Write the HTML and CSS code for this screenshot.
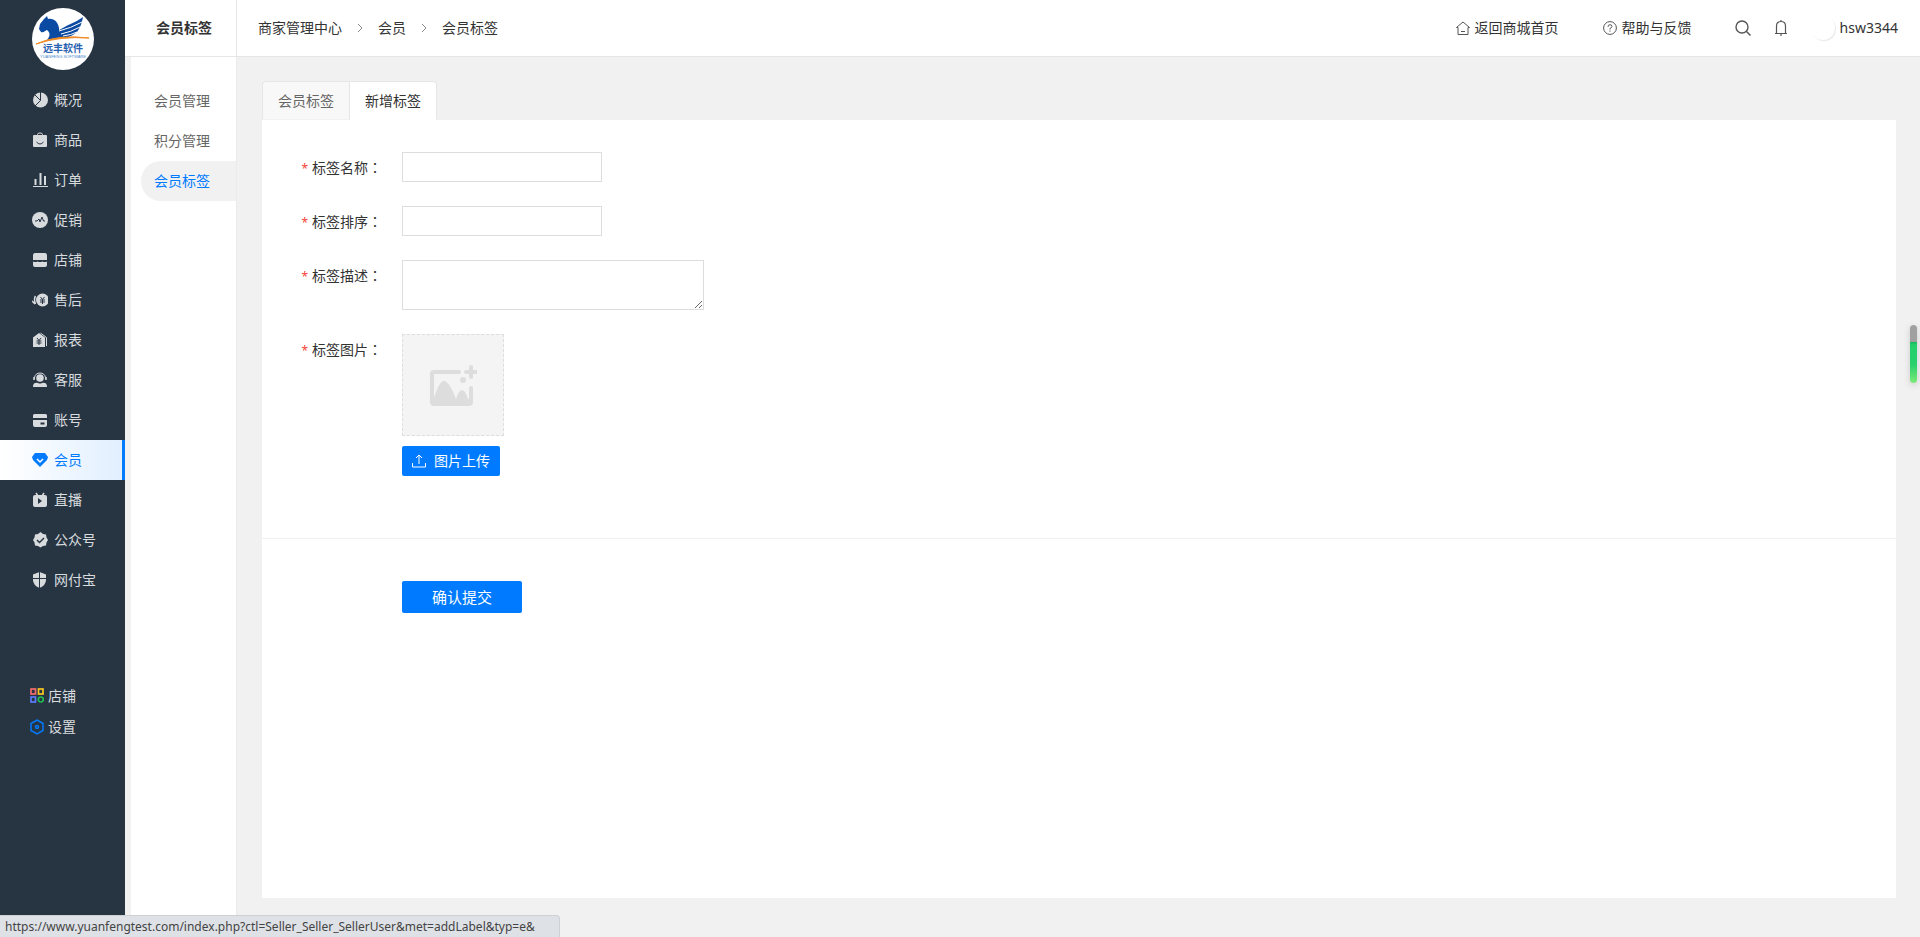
FILE: index.html
```html
<!DOCTYPE html>
<html lang="zh-CN">
<head>
    <meta charset="UTF-8">
    <meta name="viewport" content="width=device-width, initial-scale=1.0">
    <title>会员标签</title>
    <link rel="stylesheet" href="styles.css">
</head>
<body>
    <aside class="sidebar">
        <a class="logo" href="#">
            <svg viewBox="0 0 62 62" width="62" height="62">
                <circle cx="31" cy="31" r="31" fill="#fff"/>
                <path d="M7 21l1-5 4-5 3-3 1 3c6-1 10 3 11 9 0 4 2 8 6 10-6 0-13 1-19 3 4-4 5-8 1-11-3 1-3 3-6 2z" fill="#0b4aa2"/>
                <path d="M26 23c8-6 17-8 25-14-1 6-3 11-6 15-3 3-8 5-12 6-4-1-6-4-7-7z" fill="#0b4aa2"/>
                <path d="M27 23q12-3 23-9M29 26q10-2 19-7M31 28q8-1 14-4" fill="none" stroke="#fff" stroke-width="1"/>
                <path d="M4 36q22-10 53-6-29-2-53 6z" fill="#f08a24" stroke="#f08a24" stroke-width="1"/>
                <text class="logo-name" x="31" y="44" text-anchor="middle">远丰软件</text>
                <text class="logo-en" x="31" y="50" text-anchor="middle">YUANFENG SOFTWARE</text>
            </svg>
        </a>
        <nav class="menu">
            <a href="#">
                <svg viewBox="0 0 16 16"><circle cx="8.500" cy="8" r="7.500" fill="currentColor"/><path d="M8.500 0v8.500L3 14M8.500 8.500L3 3" class="cut"/></svg>概况</a>
            <a href="#">
                <svg viewBox="0 0 16 16"><path d="M5.500 4V2.500q0-1.500 2.500-1.500t2.500 1.500V4" fill="none" stroke="currentColor"/><rect x="1" y="3" width="14" height="12" rx="1" fill="currentColor"/><path d="M4.500 10q3.500 4 7 0" class="cut"/></svg>商品</a>
            <a href="#">
                <svg viewBox="0 0 16 16"><path d="M1 14.500h15" stroke="currentColor"/><path d="M3.500 13V7M8.500 13V1M13 13V4" stroke="currentColor" stroke-width="2"/></svg>订单</a>
            <a href="#">
                <svg viewBox="0 0 16 16"><circle cx="8" cy="8" r="8" fill="currentColor"/><path d="M3 9h2l2-2 1 3 2-5 1.500 4H13" class="cut"/></svg>促销</a>
            <a href="#">
                <svg viewBox="0 0 16 16"><path d="M3 1h10q2 0 2 3v4H1V4q0-3 2-3zM1 9.500q2 1 4.500 0 2.500 1 5 0 2.500 1 4.500 0V13q0 2-2 2H3q-2 0-2-2z" fill="currentColor"/></svg>店铺</a>
            <a href="#">
                <svg viewBox="0 0 16 16"><circle cx="10.500" cy="8" r="6.500" fill="currentColor"/><path d="M3.500 4Q1.500 7 3.500 12M0 9l3 3" fill="none" stroke="currentColor" stroke-width="1.500"/><path d="M8.500 5l2 2.500 2-2.500M8 8h5M8 10h5M10.500 7.500V12" class="cut"/></svg>售后</a>
            <a href="#">
                <svg viewBox="0 0 16 16"><path d="M1 5.500L7 1l6 4.500V15H1z" fill="currentColor"/><path d="M8.500 1l6 4.500V14" fill="none" stroke="currentColor"/><path d="M5 6l2 2.500L9 6M4.500 9h5M4.500 11h5M7 8.500V13" class="cut"/></svg>报表</a>
            <a href="#">
                <svg viewBox="0 0 16 16"><circle cx="8" cy="6" r="3.800" fill="currentColor"/><path d="M2.500 7V5.500Q3.500 1 8 1t5.500 4.500V7" fill="none" stroke="currentColor"/><path d="M2 5v3M14 5v3" stroke="currentColor" stroke-width="1.500"/><path d="M1 15q0-5 5-4 2 1 4 0 5-1 5 4z" fill="currentColor"/></svg>客服</a>
            <a href="#">
                <svg viewBox="0 0 16 16"><path d="M2.500 2h11Q15 2 15 3.500V6H1V3.500Q1 2 2.500 2zM1 8h14v5q0 2-2 2H3q-2 0-2-2z" fill="currentColor"/><path d="M8.500 11.500h4" class="cut" stroke-width="2"/></svg>账号</a>
            <a class="active" href="#">
                <svg viewBox="0 0 16 16"><path d="M3 1h10l3 4-1 3-7 7-7-7-1-3z" fill="currentColor"/><path d="M5 7l3 3 3-3" fill="none" stroke="#fff" stroke-width="1.500"/></svg>会员</a>
            <a href="#">
                <svg viewBox="0 0 16 16"><path d="M4 1l2 3M12 1l-2 3" stroke="currentColor" stroke-width="1.500"/><rect x="1" y="3" width="14" height="12" rx="2" fill="currentColor"/><path d="M6 6v6l4-3z" fill="#273543"/></svg>直播</a>
            <a href="#">
                <svg viewBox="0 0 16 16"><path d="M8.500 0l2.500 2 3 .5.5 3L16 8l-1.500 2.500-.5 3-3 .5-2.500 1.500L6 14l-3-.5-.5-3L1 8l1.500-2.500.5-3L6 2z" fill="currentColor"/><path d="M5 8l2.500 2.500L12 6" class="cut" stroke-width="1.500"/></svg>公众号</a>
            <a href="#">
                <svg viewBox="0 0 16 16"><path d="M7.500 0L14 2.500V8q0 5-6.500 8Q1 13 1 8V2.500z" fill="currentColor"/><path d="M7.500 0v16M1 6.500h13" class="cut"/></svg>网付宝</a>
        </nav>
        <div class="tools">
            <a href="#">
                <svg viewBox="0 0 14 16" fill="none" stroke-width="1.700"><rect x="1" y="1" width="4.500" height="5" stroke="#f56c6c"/><rect x="8.500" y="1" width="4.500" height="5" stroke="#f8c61e"/><rect x="1" y="9" width="4.500" height="5" stroke="#5b7cf7"/><circle cx="10.800" cy="11.500" r="2.500" stroke="#1fbf52"/></svg>店铺</a>
            <a href="#">
                <svg viewBox="0 0 14 16" fill="none" stroke="#007bff" stroke-width="1.500"><path d="M7 1l6 3.500v7L7 15l-6-3.500v-7z"/><circle cx="7" cy="8" r="1.500"/></svg>设置</a>
        </div>
    </aside>

    <div class="page">
        <header class="topbar">
            <h1 class="module">会员标签</h1>
            <nav class="crumbs">
                <a href="#">商家管理中心</a>
                <svg viewBox="0 0 6 10" width="6" height="10"><path d="M1 1l4 4-4 4"/></svg>
                <a href="#">会员</a>
                <svg viewBox="0 0 6 10" width="6" height="10"><path d="M1 1l4 4-4 4"/></svg>
                <a href="#">会员标签</a>
            </nav>
            <div class="user-bar">
                <a class="home" href="#">
                    <svg viewBox="0 0 14 14" width="14" height="14"><path d="M.5 6.500L7 1l6.500 5.500H12v7H2v-7zM5 10.500h4"/></svg>返回商城首页</a>
                <a class="help" href="#">
                    <svg viewBox="0 0 14 14" width="14" height="14"><circle cx="7" cy="7" r="6.400"/><path d="M5 5.800Q5 3.700 7 3.700t2 1.800Q9 6.500 7 7.500v1M7 9.500v1.200"/></svg>帮助与反馈</a>
                <button class="search" type="button" aria-label="搜索">
                    <svg viewBox="0 0 16 16" width="16" height="16" stroke-width="1.400"><circle cx="7" cy="7" r="6"/><path d="M11.500 11.500l4 4"/></svg>
                </button>
                <button class="bell" type="button" aria-label="消息">
                    <svg viewBox="0 0 12 16" width="12" height="16" stroke-width="1.200"><path d="M0 13.500h12M1.500 13.500V6Q1.500 1.500 6 1.500T10.500 6v7.500M6 0v1.500M6 13.500V16"/></svg>
                </button>
                <a class="account" href="#"><span class="avatar"></span>hsw3344</a>
            </div>
        </header>

        <div class="body">
            <nav class="submenu">
                <a href="#">会员管理</a>
                <a href="#">积分管理</a>
                <a class="active" href="#">会员标签</a>
            </nav>
            <main class="content">
                <div class="tabs">
                    <a href="#">会员标签</a>
                    <a class="active" href="#">新增标签</a>
                </div>
                <form class="panel">
                    <div class="fields">
                        <div class="row">
                            <label for="label-name"><i>*</i>标签名称<span lang="zh-TW">：</span></label>
                            <input id="label-name" type="text">
                        </div>
                        <div class="row">
                            <label for="label-order"><i>*</i>标签排序<span lang="zh-TW">：</span></label>
                            <input id="label-order" type="text">
                        </div>
                        <div class="row">
                            <label for="label-desc"><i>*</i>标签描述<span lang="zh-TW">：</span></label>
                            <textarea id="label-desc"></textarea>
                        </div>
                        <div class="row">
                            <label for="label-upload"><i>*</i>标签图片<span lang="zh-TW">：</span></label>
                            <div class="upload">
                                <div class="preview">
                                    <svg viewBox="0 0 48 42" width="48" height="42">
                                        <path d="M30 8H5Q3 8 3 10v28q0 2 2 2h35q2 0 2-2V24M37 8h10M42 3v10" fill="none" stroke="#ddd" stroke-width="4" stroke-linecap="round"/>
                                        <circle cx="34" cy="16" r="3" fill="#ddd"/>
                                        <path d="M4 37Q10 17 15 17q5 0 12 18 3-9 6-9t6 9h3v5H4z" fill="#ddd"/>
                                    </svg>
                                </div>
                                <button id="label-upload" class="btn btn-upload" type="button">
                                    <svg viewBox="0 0 14 14" width="14" height="14"><path d="M.5 9v4h13V9M7 10V1M4 4l3-3 3 3"/></svg>图片上传</button>
                            </div>
                        </div>
                    </div>
                    <div class="actions">
                        <button class="btn btn-submit" type="submit">确认提交</button>
                    </div>
                </form>
            </main>
        </div>
    </div>

    <div class="side-meter"></div>
    <div class="status">https://www.yuanfengtest.com/index.php?ctl=Seller_Seller_SellerUser&amp;met=addLabel&amp;typ=e&amp;</div>
</body>
</html>
```

FILE: styles.css
```css
* {
    box-sizing: border-box;
}
body {
    margin: 0;
    display: flex;
    min-height: 100vh;
    background: #f1f1f1;
    color: #333;
    font: 14px/20px "Noto Sans", "Noto Sans CJK SC", sans-serif;
}
a {
    color: inherit;
    text-decoration: none;
}
button, input, textarea {
    font: inherit;
}
svg {
    flex: none;
}

/* left menu */
.sidebar {
    flex: none;
    width: 125px;
    background: #273543;
    color: #d8dbde;
}
.logo {
    display: block;
    height: 62px;
    margin: 8px 0 10px 32px;
}
.logo-name {
    font: bold 10px "Noto Sans CJK SC", sans-serif;
    fill: #2a62b0;
}
.logo-en {
    font: 4px "Liberation Sans", sans-serif;
    fill: #4a8ad0;
}
.menu a {
    display: flex;
    align-items: center;
    gap: 6px;
    height: 40px;
    padding-left: 32px;
}
.menu svg {
    width: 16px;
    height: 16px;
}
.menu .cut {
    fill: none;
    stroke: #273543;
}
.menu a.active {
    color: #007bff;
    background: linear-gradient(90deg, #fff, #e1efff);
    border-right: 3px solid #007bff;
}
.tools {
    display: grid;
    gap: 11px;
    margin-top: 86px;
    padding-left: 30px;
}
.tools a {
    display: flex;
    align-items: center;
    gap: 4px;
}
.tools svg {
    width: 14px;
    height: 16px;
}

.page {
    flex: 1;
    display: flex;
    flex-direction: column;
    min-width: 0;
}

/* top bar */
.topbar {
    display: flex;
    align-items: center;
    height: 57px;
    background: #fff;
    border-bottom: 1px solid #e6e6e6;
}
.module {
    width: 112px;
    margin: 0;
    padding-left: 31px;
    border-right: 1px solid #e8e8e8;
    font-size: 14px;
    line-height: 56px;
}
.crumbs {
    display: flex;
    align-items: center;
    gap: 15px;
    padding-left: 21px;
}
.topbar svg {
    fill: none;
    stroke: #555;
}
.crumbs svg {
    stroke: #888;
}
.user-bar {
    display: flex;
    align-items: center;
    margin-left: auto;
    padding-right: 22px;
}
.user-bar a {
    display: flex;
    align-items: center;
    gap: 5px;
}
.user-bar button {
    display: flex;
    padding: 0;
    border: 0;
    background: none;
}
.help {
    margin-left: 44px;
}
.search {
    margin-left: 43px;
}
.bell, .account {
    margin-left: 24px;
}
.avatar {
    width: 24px;
    height: 24px;
    border-radius: 50%;
    box-shadow: 1px 1px 1px #e8e8e8;
}

.body {
    flex: 1;
    display: flex;
}
.submenu {
    width: 106px;
    margin-left: 6px;
    padding: 24px 0 0 10px;
    background: #fff;
    border-right: 1px solid #ebebeb;
    color: #666;
}
.submenu a {
    display: block;
    padding-left: 13px;
    line-height: 40px;
}
.submenu a.active {
    background: #f1f1f1;
    border-radius: 20px 0 0 20px;
    color: #007bff;
}

/* content */
.content {
    flex: 1;
    display: flex;
    flex-direction: column;
    padding: 24px 24px 39px 25px;
}
.tabs {
    display: flex;
}
.tabs a {
    padding: 0 15px;
    border: 1px solid #e6e6e6;
    border-bottom-color: #f1f1f1;
    border-radius: 4px 0 0 0;
    background: #f8f8f8;
    color: #666;
    line-height: 37px;
}
.tabs a.active {
    border-left: 0;
    border-bottom-color: #fff;
    border-radius: 0 4px 0 0;
    background: #fff;
    color: #333;
}
.panel {
    flex: 1;
    background: #fff;
}
.fields {
    display: grid;
    gap: 24px;
    padding: 32px 0 62px;
    border-bottom: 1px solid #f1f1f1;
}
.row {
    display: flex;
    align-items: flex-start;
    gap: 20px;
}
.row label {
    width: 120px;
    height: 30px;
    line-height: 31px;
    text-align: right;
}
.row label i {
    margin-right: 4px;
    color: #f44336;
    font-style: normal;
    font-size: 12px;
}
/* the TC face centres the full-width colon */
.row label span {
    font-family: "Noto Sans CJK TC", sans-serif;
    line-height: 20px;
}
.row input, .row textarea {
    display: block;
    width: 200px;
    height: 30px;
    padding: 4px 8px;
    border: 1px solid #ddd;
    background: #fff;
}
.row textarea {
    width: 302px;
    height: 50px;
}
.preview {
    display: flex;
    align-items: center;
    justify-content: center;
    width: 102px;
    height: 102px;
    margin-bottom: 10px;
    background: #f4f4f4;
    border: 1px dashed #ddd;
}
.btn {
    display: flex;
    align-items: center;
    justify-content: center;
    padding: 0;
    border: 0;
    border-radius: 2px;
    background: #007bff;
    color: #fff;
}
.btn svg {
    fill: none;
    stroke: #fff;
}
.btn-upload {
    gap: 8px;
    width: 98px;
    height: 30px;
}
.actions {
    padding: 42px 140px;
}
.btn-submit {
    width: 120px;
    height: 32px;
    font-size: 15px;
}

/* floating bits over the page */
.side-meter {
    position: fixed;
    top: 325px;
    right: 3px;
    width: 7px;
    height: 58px;
    border-radius: 4px;
    background: linear-gradient(#a0a0a0 17px, #14b85c 17px, #23cf6c 20px, #2ad16d 40px, #7eea77);
    box-shadow: 0 2px 6px #ccc;
}
.status {
    position: fixed;
    left: 0;
    bottom: 0;
    min-width: 560px;
    height: 22px;
    padding: 0 6px 0 5px;
    border: 1px solid #cdd0d4;
    border-width: 1px 1px 0 0;
    border-radius: 0 4px 0 0;
    background: #dee1e6;
    color: #444;
    font-size: 12px;
    line-height: 21px;
}
```
